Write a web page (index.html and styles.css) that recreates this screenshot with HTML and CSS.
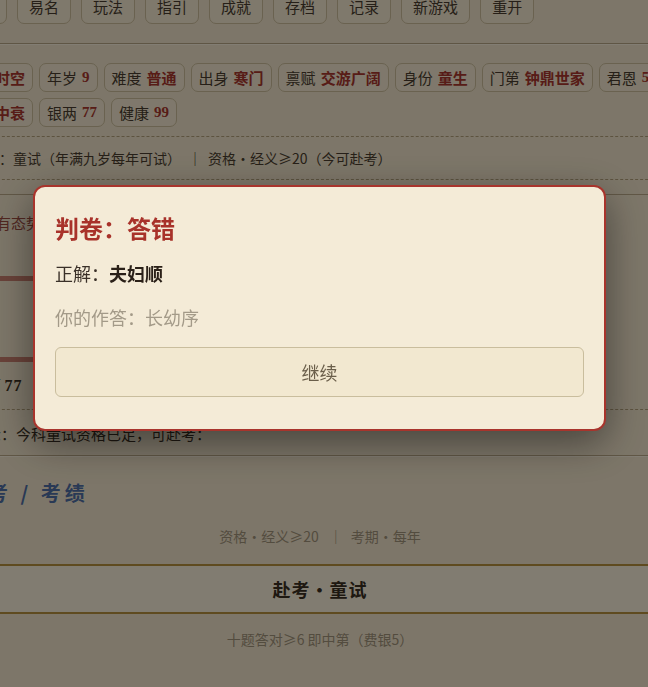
FILE: index.html
```html
<!DOCTYPE html>
<html lang="zh-CN">
<head>
<meta charset="utf-8">
<title>科举</title>
<link rel="stylesheet" href="styles.css">
</head>
<body>
<div class="page">
  <nav class="toolbar">
    <button class="tbtn">设置</button>
    <button class="tbtn">易名</button>
    <button class="tbtn">玩法</button>
    <button class="tbtn">指引</button>
    <button class="tbtn">成就</button>
    <button class="tbtn">存档</button>
    <button class="tbtn">记录</button>
    <button class="tbtn">新游戏</button>
    <button class="tbtn">重开</button>
  </nav>

  <div class="chips">
    <span class="chip">世道<b class="val">时空</b></span>
    <span class="chip">年岁<b class="val num">9</b></span>
    <span class="chip">难度<b class="val">普通</b></span>
    <span class="chip">出身<b class="val">寒门</b></span>
    <span class="chip">禀赋<b class="val">交游广阔</b></span>
    <span class="chip">身份<b class="val">童生</b></span>
    <span class="chip">门第<b class="val">钟鼎世家</b></span>
    <span class="chip">君恩<b class="val num">5</b></span>
    <span class="chip">家道<b class="val">中衰</b></span>
    <span class="chip">银两<b class="val num">77</b></span>
    <span class="chip">健康<b class="val num">99</b></span>
  </div>

  <div class="info">考期：童试（年满九岁每年可试）<span class="bar-sep">｜</span>资格・经义≥20（今可赴考）</div>

  <section class="panel">
    <div class="panel-body">
      <p class="omen">家中有态势渐成，宜潜心苦读以应科期。</p>
      <div class="bar bar-first"><div class="fill" style="width:48%"></div></div>
      <div class="bar bar-second"><div class="fill" style="width:40%"></div></div>
      <p class="money">银两 <b class="num">77</b></p>
    </div>
    <p class="hint">提示：今科童试资格已足，可赴考：</p>
  </section>

  <h2 class="exam-title">赴考 / 考绩</h2>
  <p class="sub">资格・经义≥20<span class="sep">｜</span>考期・每年</p>
  <button class="go">赴考・童试</button>
  <p class="sub sub-rule">十题答对≥6 即中第（费银5）</p>
</div>

<div class="overlay">
  <div class="modal">
    <h3 class="modal-title">判卷：答错</h3>
    <p class="answer">正解：<b>夫妇顺</b></p>
    <p class="yours">你的作答：长幼序</p>
    <button class="continue">继续</button>
  </div>
</div>
</body>
</html>
```

FILE: styles.css
```css
html, body {
  margin: 0;
  padding: 0;
  overflow: hidden;
  height: 100%;
}

body {
  background: #f0e3c9;
  font-family: "Noto Sans CJK SC", "Noto Sans", sans-serif;
  color: #4a3d2e;
  text-spacing-trim: space-all;
}

.page {
  width: 736px;
  margin: -10px 0 0 -48px;
}

/* toolbar */
.toolbar {
  display: flex;
  gap: 10px;
  padding: 0 0 19px 1px;
  border-bottom: 1px solid #b7a584;
  box-shadow: 0 1px 0 #faf0dc;
}

.tbtn {
  font-family: inherit;
  font-size: 15px;
  line-height: 20px;
  padding: 6px 11px;
  border: 1px solid #cbbc9a;
  border-radius: 7px;
  background: #f4e8d0;
  color: #4a3d2e;
}

/* chips */
.chips {
  display: flex;
  flex-wrap: wrap;
  gap: 6px;
  margin-top: 19px;
}

.chip {
  display: inline-flex;
  align-items: center;
  font-size: 15px;
  line-height: 21px;
  padding: 3px 7px;
  border: 1px solid #cbbc9a;
  border-radius: 7px;
  background: #f3e7cf;
  color: #4a3d2e;
}

.val {
  margin-left: 5px;
  color: #a8362c;
  font-weight: 700;
}

.num {
  font-family: "Liberation Serif", serif;
  font-weight: 700;
}

/* info line */
.info {
  margin-top: 9px;
  padding: 10px 19px;
  font-size: 14px;
  line-height: 22px;
  border-top: 1px dashed #b29f7a;
  border-bottom: 1px dashed #b29f7a;
  color: #4a3d2e;
}

.bar-sep {
  margin: 0 6px 0 7px;
}

/* panel behind modal */
.panel {
  margin-top: 14px;
  border-top: 1px solid #b9a786;
  border-bottom: 1px solid #b9a786;
  box-shadow: 0 1px 0 #faf0dc;
}

.panel-body {
  padding: 16px 19px 12px;
}

.omen {
  margin: 0 0 0 -5px;
  font-size: 15px;
  line-height: 24px;
  color: #9a4a3e;
}

.bar {
  height: 5px;
}

.bar-first { margin-top: 41px; }
.bar-second { margin-top: 76px; }

.fill {
  height: 100%;
  background: #c97f6e;
}

.money {
  margin: 12px 0 0;
  font-size: 15px;
  line-height: 22px;
  color: #3a2f22;
}

.money .num {
  font-size: 16px;
  letter-spacing: 1px;
}

.hint {
  margin: 0;
  padding: 12px 19px 9px;
  border-top: 1px dashed #b29f7a;
  font-size: 15px;
  line-height: 24px;
  color: #3a2f22;
}

/* exam section */
.exam-title {
  margin: 23px 0 0 12px;
  font-size: 20px;
  line-height: 28px;
  letter-spacing: 4px;
  font-weight: 700;
  color: #4f6ea4;
}

.sub {
  margin: 19px 0 0;
  text-align: center;
  font-size: 14px;
  line-height: 20px;
  color: #a09279;
}

.sep {
  margin: 0 8px 0 10px;
}

.go {
  display: block;
  width: 100%;
  margin-top: 18px;
  height: 50px;
  border: 0;
  border-top: 2px solid #b6903f;
  border-bottom: 2px solid #b6903f;
  background: #f8eed8;
  font-family: inherit;
  font-size: 18px;
  font-weight: 700;
  letter-spacing: 1px;
  color: #3a2f22;
}

.sub-rule {
  margin-top: 15px;
}

/* modal */
.overlay {
  position: fixed;
  inset: 0;
  background: rgba(0, 0, 0, 0.48);
  display: flex;
  justify-content: center;
  align-items: flex-start;
  padding: 185px 9px 0 0;
}

.modal {
  box-sizing: border-box;
  width: 573px;
  padding: 24px 20px 32px;
  background: #f4ebd7;
  border: 2px solid #a8342c;
  border-radius: 12px;
  box-shadow: 0 12px 40px rgba(0, 0, 0, 0.45);
  display: flex;
  flex-direction: column;
}

.modal-title {
  margin: 0;
  font-size: 24px;
  line-height: 34px;
  font-weight: 700;
  color: #a8322a;
}

.answer {
  margin: 14px 0 0;
  font-size: 18px;
  line-height: 29px;
  color: #3a3028;
}

.answer b {
  color: #2a2018;
}

.yours {
  margin: 15px 0 0;
  font-size: 18px;
  line-height: 29px;
  color: #a39a88;
}

.continue {
  margin-top: 15px;
  height: 50px;
  border: 1px solid #c9bd9d;
  border-radius: 6px;
  background: #f2e8d0;
  font-family: inherit;
  font-size: 18px;
  color: #6a5e4a;
}
```
